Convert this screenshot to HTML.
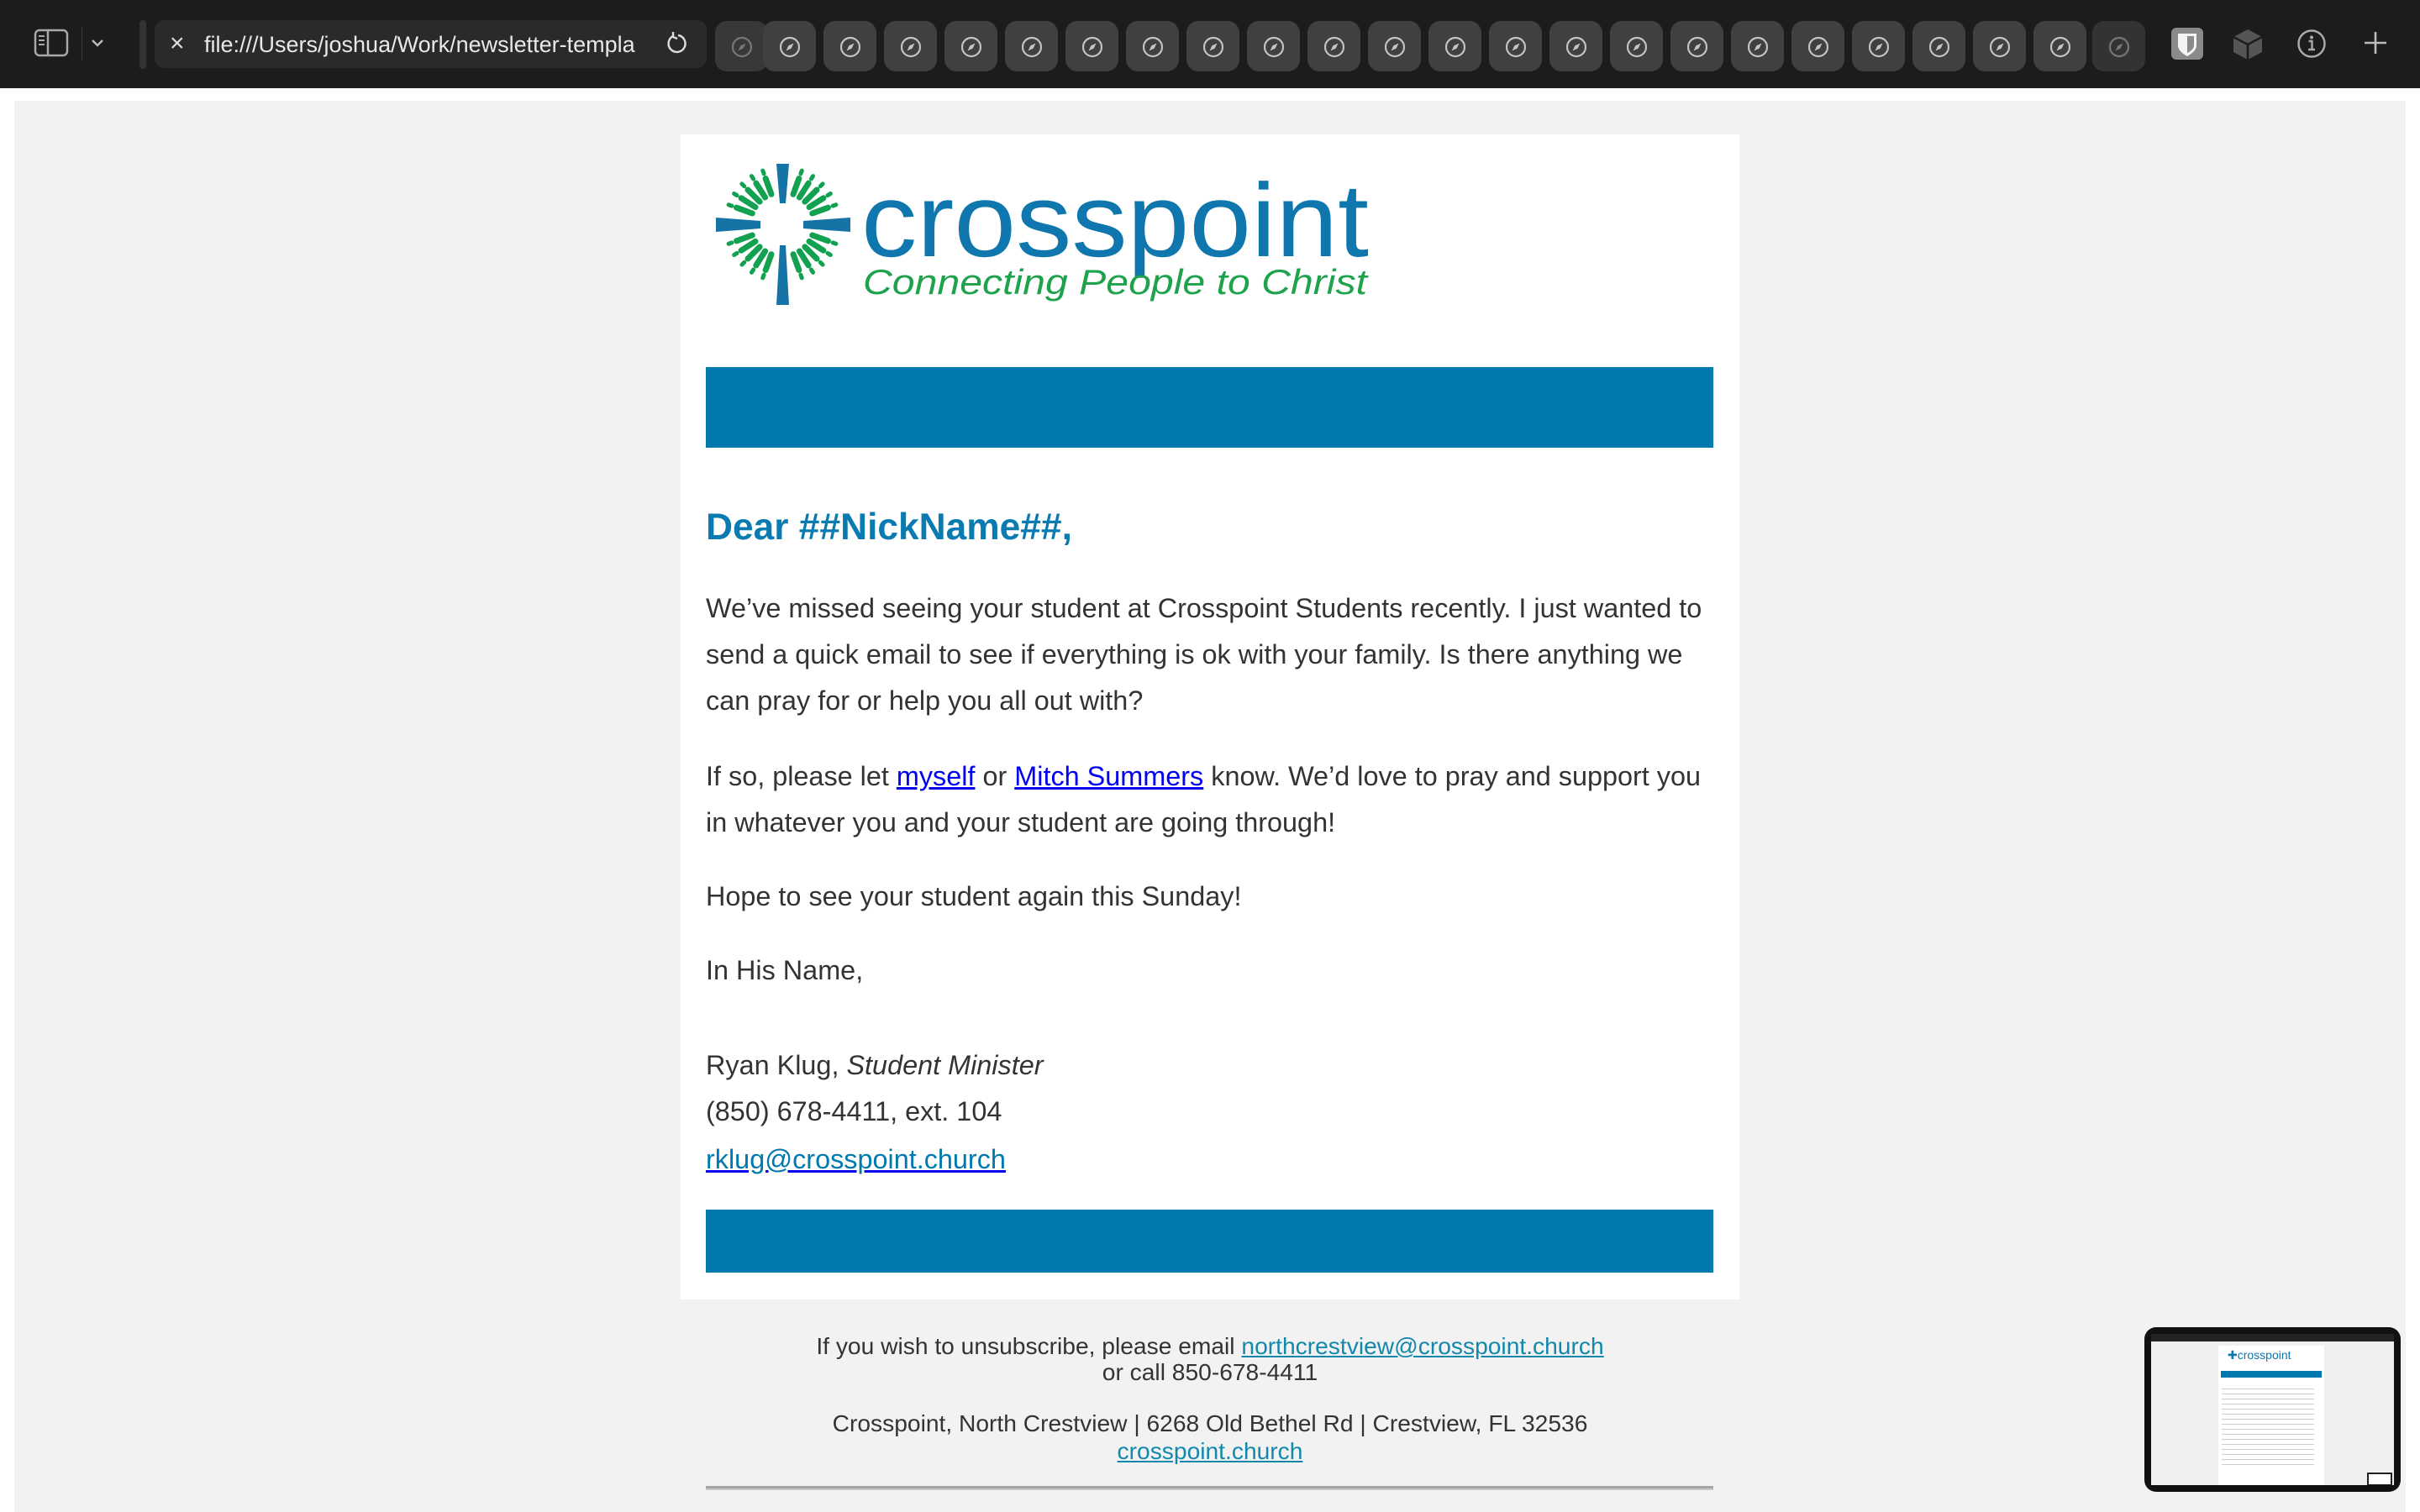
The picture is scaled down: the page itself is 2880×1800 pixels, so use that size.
<!DOCTYPE html>
<html><head><meta charset="utf-8"><style>
*{margin:0;padding:0;box-sizing:border-box}
body{width:2880px;height:1800px;overflow:hidden;background:#fff;font-family:"Liberation Sans",Helvetica,Arial,sans-serif;position:relative}
.abs{position:absolute}
#tb{left:0;top:0;width:2880px;height:105px;background:#1c1c1c}
.tab{position:absolute;top:25px;width:63px;height:60px;border-radius:14px;background:#404040}
.tab svg{position:absolute;left:19px;top:18px}
.t{position:absolute;left:840px;white-space:nowrap;font-size:32.4px;color:#333;line-height:55px}
.f{position:absolute;left:810px;width:1260px;text-align:center;font-size:28.2px;color:#333;line-height:32px;white-space:nowrap}
a{color:#0000ee;text-decoration:underline}
.fa{color:#1388ad}
</style></head><body>
<svg width="0" height="0" style="position:absolute"><defs>
<symbol id="cp" viewBox="0 0 26 26"><circle cx="13" cy="13" r="11" fill="none" stroke="currentColor" stroke-width="2.2"/><path d="M17.5 8.5 L14.6 14.6 L8.5 17.5 L11.4 11.4 Z" fill="currentColor"/></symbol>
</defs></svg>
<div id="tb" class="abs">
 <svg class="abs" style="left:40px;top:34px" width="44" height="36" viewBox="0 0 44 36"><rect x="2" y="2" width="38" height="30" rx="5" fill="none" stroke="#a8a8a8" stroke-width="2.5"/><line x1="17" y1="2" x2="17" y2="32" stroke="#a8a8a8" stroke-width="2.5"/><path d="M6 9h7M6 14h7M6 19h7" stroke="#a8a8a8" stroke-width="2"/></svg>
 <div class="abs" style="left:97px;top:32px;width:1px;height:40px;background:#3a3a3a"></div>
 <svg class="abs" style="left:107px;top:44px" width="18" height="14" viewBox="0 0 18 14"><path d="M3 4l6 6 6-6" fill="none" stroke="#bbb" stroke-width="2.4"/></svg>
 <div class="abs" style="left:166px;top:24px;width:8px;height:58px;border-radius:4px;background:#333"></div>
 <div class="abs" style="left:184px;top:24px;width:657px;height:57px;border-radius:12px;background:#2a2a2a"></div>
 <div class="abs" style="left:202px;top:34px;font-size:30px;color:#ddd;line-height:36px">×</div>
 <div class="abs" style="left:243px;top:36px;width:520px;overflow:hidden;white-space:nowrap;font-size:27px;color:#e8e8e8;line-height:34px">file:///Users/joshua/Work/newsletter-templa</div>
 <svg class="abs" style="left:790px;top:36px" width="30" height="32" viewBox="0 0 30 32"><path d="M11 7 A10 10 0 1 0 17 6" fill="none" stroke="#ddd" stroke-width="2.4"/><path d="M11 2 L11 8 L16 10" fill="none" stroke="#ddd" stroke-width="2.4"/></svg>
 <div class="tab" style="left:851px;background:#383838;color:#777"><svg width="26" height="26" style="color:#777"><use href="#cp"/></svg></div>
 <div class="tab" style="left:2490px;background:#333;color:#777"><svg width="26" height="26" style="color:#777"><use href="#cp"/></svg></div>
 <div id="tabs"></div>
 <svg class="abs" style="left:2584px;top:33px" width="38" height="38" viewBox="0 0 38 38"><rect width="38" height="38" rx="6" fill="#8a8a8a"/><path d="M8 7h22v14c0 6-6 10-11 13-5-3-11-7-11-13z" fill="#f4f4f4"/><path d="M19 10h8v11c0 4-4 7-8 9z" fill="#8a8a8a"/></svg>
 <svg class="abs" style="left:2656px;top:33px" width="38" height="40" viewBox="0 0 38 40"><path d="M19 2 L36 11 L36 29 L19 38 L2 29 L2 11Z" fill="#555"/><path d="M2 11 L19 20 L36 11 M19 20 V38" stroke="#1c1c1c" stroke-width="2.5" fill="none"/></svg>
 <svg class="abs" style="left:2733px;top:34px" width="36" height="36" viewBox="0 0 36 36"><circle cx="18" cy="18" r="15.5" fill="none" stroke="#aaa" stroke-width="2.5"/><circle cx="18" cy="10.5" r="2" fill="#aaa"/><path d="M14.5 15h4v9M14 25h8" stroke="#aaa" stroke-width="2.4" fill="none"/></svg>
 <svg class="abs" style="left:2812px;top:36px" width="30" height="30" viewBox="0 0 30 30"><path d="M15 2v26M2 15h26" stroke="#bbb" stroke-width="2.6"/></svg>
</div>
<div class="abs" style="left:17px;top:120px;width:2846px;height:1680px;background:#f2f2f2"></div>
<div class="abs" style="left:810px;top:160px;width:1260px;height:1387px;background:#fff"></div>
<svg class="abs" style="left:845px;top:190px" width="175" height="180" viewBox="0 0 175 180" id="logo"></svg>
<svg class="abs" style="left:1015px;top:190px" width="630" height="190" viewBox="0 0 630 190">
 <text x="10" y="115" font-family="Liberation Sans,sans-serif" font-size="124" fill="#0f77ad" textLength="604" lengthAdjust="spacingAndGlyphs">crosspoint</text>
 <text x="12" y="160" font-family="Liberation Sans,sans-serif" font-style="italic" font-size="42" fill="#1fa24c" textLength="600" lengthAdjust="spacingAndGlyphs">Connecting People to Christ</text>
</svg>
<div class="abs" style="left:840px;top:437px;width:1199px;height:96px;background:#0079af"></div>
<div class="abs" style="left:840px;top:600px;font-size:44.3px;font-weight:bold;color:#0a7bb0;line-height:56px;white-space:nowrap">Dear ##NickName##,</div>
<div class="t" style="top:697px">We’ve missed seeing your student at Crosspoint Students recently. I just wanted to</div>
<div class="t" style="top:752px">send a quick email to see if everything is ok with your family. Is there anything we</div>
<div class="t" style="top:807px">can pray for or help you all out with?</div>
<div class="t" style="top:897px">If so, please let <a>myself</a> or <a>Mitch Summers</a> know. We’d love to pray and support you</div>
<div class="t" style="top:952px">in whatever you and your student are going through!</div>
<div class="t" style="top:1040px">Hope to see your student again this Sunday!</div>
<div class="t" style="top:1128px">In His Name,</div>
<div class="t" style="top:1241px">Ryan Klug, <i>Student Minister</i></div>
<div class="t" style="top:1296px">(850) 678-4411, ext. 104</div>
<div class="t" style="top:1353px"><a style="color:#0079af;text-decoration-color:#0000ee">rklug@crosspoint.church</a></div>
<div class="abs" style="left:840px;top:1440px;width:1199px;height:75px;background:#0079af"></div>
<div class="f" style="top:1586px">If you wish to unsubscribe, please email <a class="fa">northcrestview@crosspoint.church</a></div>
<div class="f" style="top:1617px">or call 850-678-4411</div>
<div class="f" style="top:1678px">Crosspoint, North Crestview | 6268 Old Bethel Rd | Crestview, FL 32536</div>
<div class="f" style="top:1711px"><a class="fa">crosspoint.church</a></div>
<div class="abs" style="left:840px;top:1769px;width:1199px;height:5px;background:#a4a4a4;border-bottom:2px solid #c8c8c8"></div>
<div class="abs" style="left:2552px;top:1580px;width:305px;height:196px;border-radius:14px;background:#111">
 <div class="abs" style="left:8px;top:8px;width:289px;height:180px;background:#f0f0f0;overflow:hidden">
  <div class="abs" style="left:0;top:0;width:289px;height:9px;background:#222"></div>
  <div class="abs" style="left:80px;top:14px;width:126px;height:170px;background:#fff"></div>
  <div class="abs" style="left:91px;top:17px;font-size:14px;color:#0f77ad">✚crosspoint</div>
  <div class="abs" style="left:83px;top:44px;width:120px;height:8px;background:#0079af"></div>
  <div class="abs" style="left:84px;top:60px;width:110px;height:100px;background:repeating-linear-gradient(#fff 0 5px,#ccc 5px 6px)"></div>
  <div class="abs" style="left:257px;top:165px;width:30px;height:16px;border:2px solid #222;background:#fff"></div>
 </div>
</div>
<script>
var h='';for(var i=0;i<22;i++){h+='<div class="tab" style="left:'+(908+72*i)+'px"><svg width="26" height="26" style="color:#c4c4c4"><use href="#cp"/></svg></div>';}
document.getElementById('tabs').innerHTML=h;
var s='',cx=86,cy=77;
s+='<path d="M79 5 L94 5 L90 52 L83 52Z" fill="#1673a6"/><path d="M83 102 L90 102 L94 173 L79 173Z" fill="#1673a6"/>';
s+='<path d="M7 69 L60 73 L60 82 L7 86Z" fill="#1673a6"/><path d="M111 73 L167 69 L167 86 L111 82Z" fill="#1673a6"/>';
for(var q=0;q<4;q++){for(var k=0;k<5;k++){var a=(q*90+20+k*12.5)*Math.PI/180;var c=Math.cos(a),n=Math.sin(a);
s+='<line x1="'+(cx+c*38)+'" y1="'+(cy+n*38)+'" x2="'+(cx+c*58)+'" y2="'+(cy+n*58)+'" stroke="#12a150" stroke-width="7" stroke-linecap="round"/>';
s+='<line x1="'+(cx+c*64)+'" y1="'+(cy+n*64)+'" x2="'+(cx+c*68)+'" y2="'+(cy+n*68)+'" stroke="#12a150" stroke-width="5" stroke-linecap="round"/>';}}
document.getElementById('logo').innerHTML=s;
</script>
</body></html>
